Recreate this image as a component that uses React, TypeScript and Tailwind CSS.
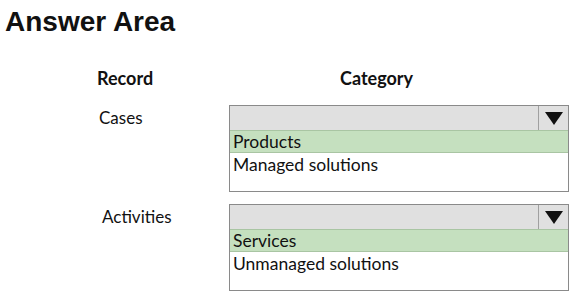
const rows = [
    { record: "Cases", indent: "pl-[99px]", options: ["Products", "Managed solutions"] },
    { record: "Activities", indent: "pl-[102px]", options: ["Services", "Unmanaged solutions"] },
];

const Caret = () => (
    <svg width="18" height="13" viewBox="0 0 18 13">
        <polygon points="0,0 18,0 9,13" fill="#111" />
    </svg>
);

const Dropdown = ({ options }: { options: string[] }) => {
    const [first, second] = options;
    return <div className="w-[340px] border border-[#8a8a8a] bg-white">
        <div className="h-[24px] bg-[#e0e0e0] flex justify-end">
            <div className="w-[30px] border-l border-[#a0a0a0] flex items-center justify-center">
                <Caret />
            </div>
        </div>
        <div className="h-[23px] bg-[#c5e0bf] border-y border-[#a9c5a3] pl-[3px] flex items-center text-[17.5px] leading-none">{first}</div>
        <div className="h-[23px] pl-[3px] flex items-center text-[17.5px] leading-none">{second}</div>
        <div className="h-[15px]" />
    </div>;
};

export default function App() {
    return <div className="w-[577px] h-[300px] bg-white text-[#111] overflow-hidden font-['Lato','Open_Sans',sans-serif]">
        <h1 className="pl-[5px] pt-[8px] text-[28px] leading-[28px] font-bold font-['Liberation_Sans',Arial,sans-serif]">Answer Area</h1>

        <div className="flex mt-[33px] text-[18px] font-bold leading-none">
            <div className="w-[229px] pl-[97px]">Record</div>
            <div className="pl-[111px]">Category</div>
        </div>

        <div className="flex flex-col gap-[12px] mt-[18px]">
            {rows.map((row) => (
                <div key={row.record} className="flex">
                    <div className={`w-[229px] ${row.indent} pt-[4px] text-[17px] leading-none`}>{row.record}</div>
                    <Dropdown options={row.options} />
                </div>
            ))}
        </div>
    </div>;
}
